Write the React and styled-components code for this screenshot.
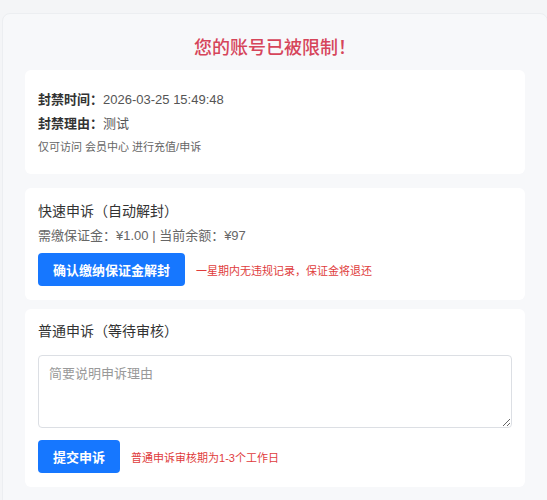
import React from 'react'
import styled, { createGlobalStyle } from 'styled-components'

const GlobalStyle = createGlobalStyle`
  html, body {
    margin: 0;
    padding: 0;
    background: #f4f5f7;
  }
  body {
    font-family: "Liberation Sans", "Noto Sans CJK SC", sans-serif;
    color: #333;
    overflow: hidden;
  }
`

const Page = styled.div`
  padding: 13px 0 0 2px;
`

const Panel = styled.div`
  width: 500px;
  min-height: 490px;
  padding: 0 22px 14px;
  background: #f7f8fa;
  border: 1px solid #eceef1;
  border-radius: 8px;
`

const Title = styled.h2`
  margin: 0;
  padding: 22px 0 10px;
  font-size: 18px;
  font-weight: 500;
  line-height: 24px;
  color: #d6455a;
  text-align: center;
`

const Card = styled.div`
  background: #fff;
  border-radius: 6px;
  padding: ${p => p.$pad || '13px'};
  margin-bottom: ${p => p.$space || '10px'};
`

const InfoLine = styled.div`
  font-size: 13px;
  line-height: 24px;
  color: #555;
`

const Label = styled.span`
  font-weight: bold;
  color: #333;
`

const Hint = styled.div`
  font-size: 11px;
  line-height: 22px;
  color: #666;
`

const CardTitle = styled.div`
  font-size: 14px;
  line-height: 20px;
  color: #333;
  margin-bottom: ${p => p.$gap || '6px'};
`

const Amount = styled.div`
  font-size: 13px;
  line-height: 18px;
  color: #666;
  margin-bottom: 8px;
`

const ActionRow = styled.div`
  display: flex;
  align-items: center;
  gap: 11px;
`

const Button = styled.button`
  height: 33px;
  padding: 0 15px;
  border: none;
  border-radius: 4px;
  background: #1677ff;
  color: #fff;
  font-family: inherit;
  font-size: 13px;
  font-weight: bold;
  cursor: pointer;
`

const Note = styled.span`
  font-size: 11px;
  color: #e03c3c;
`

const TextArea = styled.textarea`
  display: block;
  box-sizing: border-box;
  width: 100%;
  height: 73px;
  margin-bottom: 12px;
  padding: 8px 10px;
  border: 1px solid #dcdfe4;
  border-radius: 4px;
  font-family: inherit;
  font-size: 13px;
  line-height: 20px;
  color: #333;
  &::placeholder {
    color: #999;
  }
`

export default function App() {
  return (
    <Page>
      <GlobalStyle />
      <Panel>
        <Title>您的账号已被限制！</Title>

        <Card $pad="18px 13px 16px" $space="14px">
          <InfoLine><Label>封禁时间：</Label>2026-03-25 15:49:48</InfoLine>
          <InfoLine><Label>封禁理由：</Label>测试</InfoLine>
          <Hint>仅可访问 会员中心 进行充值/申诉</Hint>
        </Card>

        <Card $pad="13px 13px 14px" $space="9px">
          <CardTitle>快速申诉（自动解封）</CardTitle>
          <Amount>需缴保证金：¥1.00 | 当前余额：¥97</Amount>
          <ActionRow>
            <Button>确认缴纳保证金解封</Button>
            <Note>一星期内无违规记录，保证金将退还</Note>
          </ActionRow>
        </Card>

        <Card $pad="12px 13px 14px">
          <CardTitle $gap="14px">普通申诉（等待审核）</CardTitle>
          <TextArea placeholder="简要说明申诉理由" />
          <ActionRow>
            <Button>提交申诉</Button>
            <Note>普通申诉审核期为1-3个工作日</Note>
          </ActionRow>
        </Card>
      </Panel>
    </Page>
  )
}
